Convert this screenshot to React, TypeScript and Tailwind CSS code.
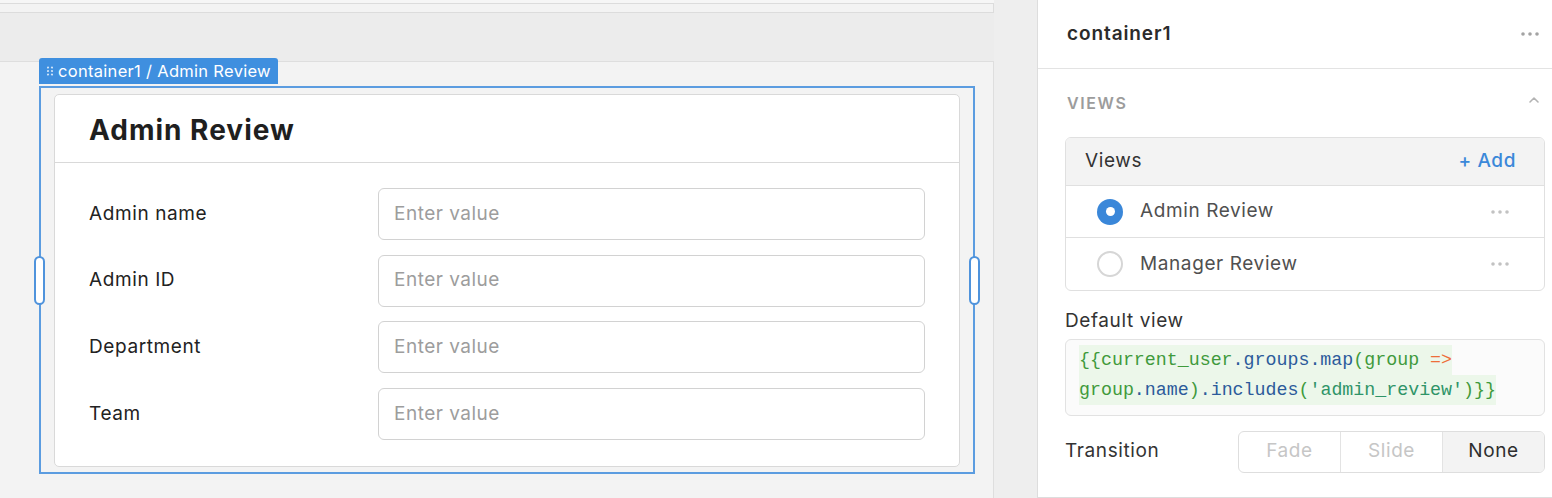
import { Fragment } from 'react';

const FIELDS = ['Admin name', 'Admin ID', 'Department', 'Team'];

function Dots({ className }: { className: string }) {
  return (
    <svg width="20" height="6" viewBox="0 0 20 6" className={className}>
      <circle cx="3" cy="3" r="1.8" fill="currentColor" />
      <circle cx="10" cy="3" r="1.8" fill="currentColor" />
      <circle cx="17" cy="3" r="1.8" fill="currentColor" />
    </svg>
  );
}

function Handle() {
  return <div className="w-[11px] h-[49px] rounded-full bg-white border-2 border-[#4f93dc]" />;
}

function Radio({ on }: { on: boolean }) {
  return on ? (
    <div className="w-[26px] h-[26px] rounded-full bg-[#3a87d9] flex items-center justify-center">
      <div className="w-[9px] h-[9px] rounded-full bg-white" />
    </div>
  ) : (
    <div className="w-[26px] h-[26px] rounded-full border-2 border-[#d6d6d6] bg-white" />
  );
}

export default function App() {
  return (
    <div className="flex w-[1552px] h-[498px] overflow-hidden font-['Inter',sans-serif] text-[#2a2a2a]">
      {/* Canvas */}
      <div className="w-[1037px] shrink-0 bg-[#eeeeee] flex flex-col">
        <div className="w-[994px] pt-[3px] bg-[#f6f6f6]">
          <div className="h-[10px] border-y border-r border-[#dcdcdc] bg-[#f3f3f3]" />
        </div>
        <div className="h-[48px] w-[994px] bg-[#ececec]" />
        <div className="relative flex-1 w-[994px] bg-[#f3f3f3] border-t border-r border-[#dedede] pt-[24px] pl-[39px]">
          {/* selection tag */}
          <div className="absolute left-[39px] top-[-4px] h-[26px] pl-[8px] pr-[7px] rounded-t-[3px] bg-[#3f8fdf] text-white flex items-center gap-[5px] text-[16.5px] tracking-[0.3px]">
            <svg width="6" height="10" viewBox="0 0 6 10">
              {[1, 5].map((x) =>
                [1.5, 5, 8.5].map((y) => <circle key={`${x}-${y}`} cx={x} cy={y} r="1.1" fill="#cfe3f8" />)
              )}
            </svg>
            <span>container1 / Admin Review</span>
          </div>

          {/* selected container */}
          <div className="relative w-[936px] h-[388px] border-2 border-[#5b9ce0] pt-[6px] px-[13px] pb-[5px]">
            <div className="absolute left-[-7px] top-[168px]"><Handle /></div>
            <div className="absolute right-[-7px] top-[168px]"><Handle /></div>

            <div className="h-full bg-white border border-[#d9d9d9] rounded-[5px] flex flex-col">
              <div className="h-[68px] border-b border-[#d9d9d9] flex items-center pl-[34px] pt-[2px]">
                <h1 className="text-[28px] font-bold text-[#1f1f1f] tracking-[1px]">Admin Review</h1>
              </div>
              <div className="flex flex-col gap-[14.7px] pt-[25px] pl-[34px] pr-[34px]">
                {FIELDS.map((f) => (
                  <div key={f} className="flex items-center">
                    <div className="w-[289px] text-[19px] text-[#222222] tracking-[0.6px]">{f}</div>
                    <div className="flex-1 h-[52px] rounded-[6px] border border-[#d2d2d2] bg-white flex items-center pl-[15px] text-[19px] text-[#9d9d9d] tracking-[0.5px]">
                      Enter value
                    </div>
                  </div>
                ))}
              </div>
            </div>
          </div>
        </div>
      </div>

      {/* Inspector */}
      <div className="flex-1 bg-white border-l border-[#dddddd] border-b flex flex-col">
        <div className="h-[69px] shrink-0 border-b border-[#e3e3e3] flex items-center justify-between pl-[29px] pr-[12px]">
          <span className="text-[19px] font-semibold text-[#2b2b2b] tracking-[0.9px]">container1</span>
          <Dots className="text-[#a3a3a3]" />
        </div>

        <div className="h-[68px] shrink-0 flex items-center justify-between pl-[29px] pr-[12px]">
          <span className="text-[16px] font-semibold tracking-[1.6px] text-[#9c9c9c]">VIEWS</span>
          <svg width="12" height="8" viewBox="0 0 12 8" className="mb-[6px]">
            <polyline points="2,6 6,2 10,6" fill="none" stroke="#b3b3b3" strokeWidth="1.6" strokeLinecap="round" strokeLinejoin="round" />
          </svg>
        </div>

        <div className="pl-[27px] pr-[7px]">
          <div className="border border-[#e0e0e0] rounded-[6px] overflow-hidden">
            <div className="h-[48px] bg-[#f3f3f3] border-b border-[#e0e0e0] flex items-center justify-between pl-[19px] pr-[28px] text-[19px] tracking-[0.6px]">
              <span className="text-[#333333]">Views</span>
              <span className="text-[#3b88d9] font-medium">+ Add</span>
            </div>
            {['Admin Review', 'Manager Review'].map((v, i) => (
              <div
                key={v}
                className={`h-[52px] flex items-center pl-[31px] pr-[34px] ${i === 0 ? 'border-b border-[#e0e0e0]' : ''}`}
              >
                <Radio on={i === 0} />
                <span className="ml-[17px] flex-1 text-[19px] tracking-[0.6px] text-[#505050]">{v}</span>
                <Dots className="text-[#c2c2c2]" />
              </div>
            ))}
          </div>

          <div className="mt-[16px] text-[19px] tracking-[0.6px] text-[#333333]">Default view</div>

          <div className="mt-[3px] h-[77px] border border-[#e2e2e2] rounded-[6px] bg-[#fbfbfb] pl-[13px] pt-[5px] font-['Liberation_Mono',monospace] text-[18.3px] leading-[30px]">
            <span className="bg-[#ecf7ea] py-[5px]">
              <span className="text-[#3f9a3c]">{'{{current_user'}</span>
              <span className="text-[#2c5b9b]">.groups.map</span>
              <span className="text-[#3f9a3c]">(group </span>
              <span className="text-[#ee6e3a]">=&gt;</span>
              <span> </span>
            </span>
            <br />
            <span className="bg-[#ecf7ea] py-[5px]">
              <span className="text-[#3f9a3c]">group</span>
              <span className="text-[#2c5b9b]">.name</span>
              <span className="text-[#3f9a3c]">)</span>
              <span className="text-[#2c5b9b]">.includes</span>
              <span className="text-[#3f9a3c]">(</span>
              <span className="text-[#2f9468]">'admin_review'</span>
              <span className="text-[#3f9a3c]">{')}}'}</span>
            </span>
          </div>

          <div className="mt-[15px] flex items-center">
            <span className="w-[173px] text-[19px] tracking-[0.6px] text-[#333333]">Transition</span>
            <div className="flex-1 h-[42px] flex border border-[#dedede] rounded-[6px] overflow-hidden text-[19px] tracking-[0.6px]">
              {['Fade', 'Slide', 'None'].map((t, i) => (
                <Fragment key={t}>
                  <div
                    className={`flex-1 flex items-center justify-center ${
                      i === 2 ? 'bg-[#f3f3f3] text-[#2e2e2e]' : 'text-[#c6c6c6]'
                    } ${i < 2 ? 'border-r border-[#e3e3e3]' : ''}`}
                  >
                    {t}
                  </div>
                </Fragment>
              ))}
            </div>
          </div>
        </div>
      </div>
    </div>
  );
}
